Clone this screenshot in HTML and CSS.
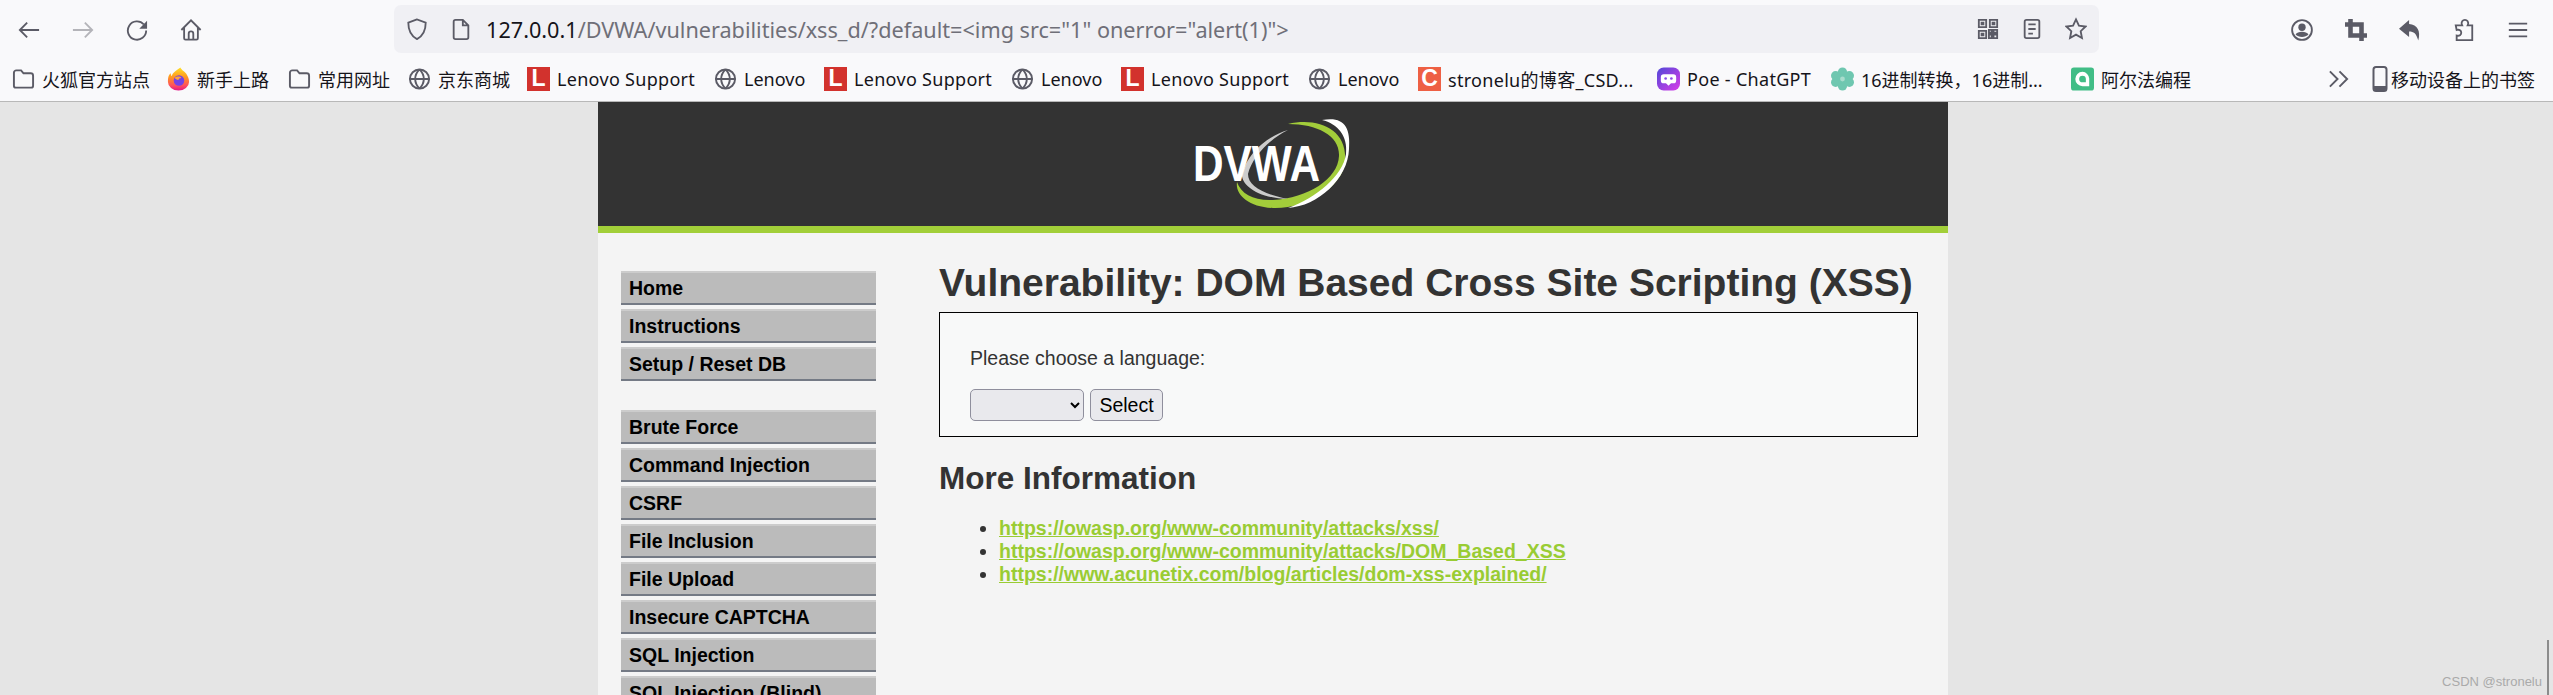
FILE: index.html
```html
<!DOCTYPE html>
<html lang="en">
<head>
  <meta charset="UTF-8">
  <title>Vulnerability: DOM Based Cross Site Scripting (XSS)</title>
  <link rel="stylesheet" href="styles.css">
</head>
<body>
  <!-- Browser toolbar -->
  <div class="toolbar">
    <div class="nav-icons">
      <svg class="icon" viewBox="0 0 24 24"><path d="M23 12H2M10 4l-8 8 8 8"/></svg>
      <svg class="icon icon-off" viewBox="0 0 24 24"><path d="M1 12h21M14 4l8 8-8 8"/></svg>
      <svg class="icon" viewBox="0 0 24 24"><path d="M19.500 6A10 10 0 1 0 22 12.500"/><path class="solid" d="M23 2v8.500h-8.500z"/></svg>
      <svg class="icon" viewBox="0 0 24 24"><path d="M1.500 12 12 1.500 22.500 12M4.500 9.500V21a1.500 1.500 0 0 0 1.500 1.500h12a1.500 1.500 0 0 0 1.500-1.500V9.500M9.500 22.500V16a2.500 2.500 0 0 1 5 0v6.500"/></svg>
    </div>
    <div class="urlbar">
      <svg class="icon" viewBox="0 0 24 24"><path d="M12 1.500 2.500 5c0 9 2.500 14.500 9.500 18 7-3.500 9.500-9 9.500-18z"/></svg>
      <svg class="icon icon-doc" viewBox="0 0 24 24"><path d="M4 4a2 2 0 0 1 2-2h8l6 6v13a2 2 0 0 1-2 2H6a2 2 0 0 1-2-2zM14 2v6h6"/></svg>
      <div class="url"><span class="url-host">127.0.0.1</span>/DVWA/vulnerabilities/xss_d/?default=&lt;img src="1" onerror="alert(1)"&gt;</div>
      <div class="url-actions">
        <svg class="icon" viewBox="0 0 24 24"><path d="M2 2h8v8H2zM14 2h8v8h-8zM2 14h8v8H2zM5 5h2v2H5zM17 5h2v2h-2zM5 17h2v2H5zM13 13h3v3h-3zM18 13h4v3h-4zM13 18h3v4h-3zM18 18h4v4h-4z"/></svg>
        <svg class="icon" viewBox="0 0 24 24"><path d="M4 4a2 2 0 0 1 2-2h12a2 2 0 0 1 2 2v16a2 2 0 0 1-2 2H6a2 2 0 0 1-2-2zM8 7h8M8 12h8M8 17h5"/></svg>
        <svg class="icon" viewBox="0 0 24 24"><path d="m12 1.500 3.200 6.900 7.300.9-5.400 5.100 1.400 7.400-6.500-3.700-6.500 3.700 1.400-7.400L1.500 9.300l7.300-.9z"/></svg>
      </div>
    </div>
    <div class="tool-icons">
      <svg class="icon" viewBox="0 0 24 24"><circle cx="12" cy="12" r="10.800"/><circle class="solid" cx="12" cy="9" r="4"/><path class="solid" d="M5 17c3 3.500 11 3.500 14 0-1-2-4-3-7-3s-6 1-7 3z"/></svg>
      <svg class="icon icon-crop" viewBox="0 0 24 24"><path d="M6 0v18h18M0 6h18v18"/></svg>
      <svg class="icon" viewBox="0 0 24 24"><path class="solid" d="M11 1 0 10.500l11 9v-6c5 0 8 2 10 10 3-10-1-17.500-10-18z"/></svg>
      <svg class="icon" viewBox="0 0 24 24"><path d="M3 7h7c-2-4 1-6 3-6s5 2 3 6h5v16H4v-5c3 1 5-1 5-3s-2-4-5-3z"/></svg>
      <svg class="icon" viewBox="0 0 24 24"><path d="M2 5h20M2 12h20M2 19h20"/></svg>
    </div>
  </div>

  <!-- Bookmarks -->
  <div class="bookmarks">
    <div class="bookmark">
      <svg class="bm-icon" viewBox="0 0 24 24"><path class="bm-line" d="M2 5.500A2.500 2.500 0 0 1 4.500 3h5l2.500 3h7.500A2.500 2.500 0 0 1 22 8.500V19a2 2 0 0 1-2 2H4a2 2 0 0 1-2-2z"/></svg>
      火狐官方站点
    </div>
    <div class="bookmark">
      <svg class="bm-icon" viewBox="0 0 24 24"><defs><linearGradient id="fx" x1="0" y1="0" x2="0" y2="1"><stop offset="0" stop-color="#ffe226"/><stop offset=".4" stop-color="#ff9a1f"/><stop offset=".78" stop-color="#ff4f5e"/><stop offset="1" stop-color="#e31587"/></linearGradient></defs><path d="M14 0c1 3 5 4 7 8 2 3 2 6 2 7a11 9 0 0 1-22 0c0-3 0-7 3-9 0 1 0 2 1 3 1-4 5-6 9-9z" fill="url(#fx)"/><circle cx="12.500" cy="13.500" r="5.500" fill="#7542e5"/><path d="M8 11c2-2 6-2 7 0-2 0-3 1-3 2-2 0-3-1-4-2z" fill="#ffa436"/></svg>
      新手上路
    </div>
    <div class="bookmark">
      <svg class="bm-icon" viewBox="0 0 24 24"><path class="bm-line" d="M2 5.500A2.500 2.500 0 0 1 4.500 3h5l2.500 3h7.500A2.500 2.500 0 0 1 22 8.500V19a2 2 0 0 1-2 2H4a2 2 0 0 1-2-2z"/></svg>
      常用网址
    </div>
    <div class="bookmark">
      <svg class="bm-icon" viewBox="0 0 24 24"><circle class="bm-line" cx="12" cy="12" r="10"/><path class="bm-line" d="M2 12h20M12 2c-6 6-6 14 0 20M12 2c6 6 6 14 0 20"/></svg>
      京东商城
    </div>
    <div class="bookmark latin"><span class="favicon favicon-lenovo">L</span>Lenovo Support</div>
    <div class="bookmark">
      <svg class="bm-icon" viewBox="0 0 24 24"><circle class="bm-line" cx="12" cy="12" r="10"/><path class="bm-line" d="M2 12h20M12 2c-6 6-6 14 0 20M12 2c6 6 6 14 0 20"/></svg>
      Lenovo
    </div>
    <div class="bookmark latin"><span class="favicon favicon-lenovo">L</span>Lenovo Support</div>
    <div class="bookmark">
      <svg class="bm-icon" viewBox="0 0 24 24"><circle class="bm-line" cx="12" cy="12" r="10"/><path class="bm-line" d="M2 12h20M12 2c-6 6-6 14 0 20M12 2c6 6 6 14 0 20"/></svg>
      Lenovo
    </div>
    <div class="bookmark latin"><span class="favicon favicon-lenovo">L</span>Lenovo Support</div>
    <div class="bookmark">
      <svg class="bm-icon" viewBox="0 0 24 24"><circle class="bm-line" cx="12" cy="12" r="10"/><path class="bm-line" d="M2 12h20M12 2c-6 6-6 14 0 20M12 2c6 6 6 14 0 20"/></svg>
      Lenovo
    </div>
    <div class="bookmark latin"><span class="favicon favicon-csdn">C</span>stronelu的博客_CSD...</div>
    <div class="bookmark latin">
      <svg class="bm-icon" viewBox="0 0 24 24"><defs><linearGradient id="poe" x1="0" y1="0" x2="1" y2="1"><stop offset="0" stop-color="#5148d8"/><stop offset="1" stop-color="#d93ce8"/></linearGradient></defs><rect y="0" width="24" height="24" rx="7" fill="url(#poe)"/><rect x="4" y="7" width="16" height="9.500" rx="3" fill="#fff"/><path d="M9 16h6l-3 3z" fill="#fff"/><circle cx="9" cy="11.500" r="1.400" fill="#8a4be8"/><circle cx="15" cy="11.500" r="1.400" fill="#8a4be8"/></svg>
      Poe - ChatGPT
    </div>
    <div class="bookmark">
      <svg class="bm-icon" viewBox="0 0 24 24"><circle cx="12" cy="4.800" r="4.800" fill="#6fc7b0"/><circle cx="12" cy="19.200" r="4.800" fill="#6fc7b0"/><circle cx="4.800" cy="8.500" r="4.800" fill="#6fc7b0"/><circle cx="19.200" cy="8.500" r="4.800" fill="#6fc7b0"/><circle cx="4.800" cy="15.500" r="4.800" fill="#6fc7b0"/><circle cx="19.200" cy="15.500" r="4.800" fill="#6fc7b0"/><circle cx="12" cy="12" r="5" fill="#6fc7b0"/><circle cx="12" cy="12" r="2.500" fill="#a9dccd"/></svg>
      16进制转换，16进制...
    </div>
    <div class="bookmark">
      <svg class="bm-icon" viewBox="0 0 24 24"><rect width="24" height="24" rx="3" fill="#41bd86"/><path d="M12 4.500a7.500 7.500 0 1 0 0 15h7v-8A7.500 7.500 0 0 0 12 4.500zm0 4a3.500 3.500 0 0 1 3.500 3.500v3.500H12a3.500 3.500 0 0 1 0-7z" fill="#fff"/></svg>
      阿尔法编程
    </div>
    <div class="bookmarks-end">
      <svg class="bm-icon" viewBox="0 0 24 24"><path class="bm-line" d="m3 4 8 8-8 8M13 4l8 8-8 8"/></svg>
      <div class="bookmark mobile">
        <svg class="bm-phone" viewBox="0 0 16 26"><rect class="bm-line" x="1.500" y="1" width="13" height="24" rx="2.500"/><path d="M2 20h12v3a1.500 1.500 0 0 1-1.500 1.500h-9A1.500 1.500 0 0 1 2 23z" fill="#5b5b66"/></svg>
        移动设备上的书签
      </div>
    </div>
  </div>

  <!-- Page -->
  <div class="page">
    <div class="container">
      <div class="header">
        <svg class="logo" viewBox="0 0 165 100">
          <path d="M100 10C130 3 160 15 157 48 155 72 120 95 85 94 60 93 47 80 49 68 53 80 66 87 85 86 120 84 150 65 151 42 152 22 130 10 100 10Z" fill="#a2cd3a"/>
          <path d="M134 6C155 2 163 12 161 35 160 65 130 92 100 94 128 84 155 62 158 40 160 22 150 10 134 6Z" fill="#fff"/>
          <path d="M100 16C80 22 60 38 54 60 53 70 68 84 100 85 75 80 60 72 60 60 64 44 80 26 100 16Z" fill="#ccc"/>
          <text class="logo-text" x="5" y="67" textLength="127" lengthAdjust="spacingAndGlyphs">DVWA</text>
        </svg>
      </div>
      <div class="content">
        <div class="sidebar">
          <ul class="menu">
            <li>Home</li>
            <li>Instructions</li>
            <li>Setup / Reset DB</li>
          </ul>
          <ul class="menu">
            <li>Brute Force</li>
            <li>Command Injection</li>
            <li>CSRF</li>
            <li>File Inclusion</li>
            <li>File Upload</li>
            <li>Insecure CAPTCHA</li>
            <li>SQL Injection</li>
            <li>SQL Injection (Blind)</li>
          </ul>
        </div>
        <div class="main">
          <h1>Vulnerability: DOM Based Cross Site Scripting (XSS)</h1>
          <div class="vulnerable-code">
            <p>Please choose a language:</p>
            <form class="lang-form">
              <select class="lang-select"><option></option></select>
              <button type="button" class="select-btn">Select</button>
            </form>
          </div>
          <h2>More Information</h2>
          <ul class="links">
            <li><a href="#">https://owasp.org/www-community/attacks/xss/</a></li>
            <li><a href="#">https://owasp.org/www-community/attacks/DOM_Based_XSS</a></li>
            <li><a href="#">https://www.acunetix.com/blog/articles/dom-xss-explained/</a></li>
          </ul>
        </div>
      </div>
    </div>
    <div class="scroll-thumb"></div>
    <div class="watermark">CSDN @stronelu</div>
  </div>
</body>
</html>
```

FILE: styles.css
```css
html, body {
  height: 100%;
}

body {
  margin: 0;
  display: flex;
  flex-direction: column;
  overflow: hidden;
  font-family: "Liberation Sans", Arial, sans-serif;
  background-color: #e5e5e5;
}

/* Browser toolbar */
.toolbar {
  display: flex;
  align-items: center;
  height: 58px;
  background-color: #f9f9fb;
  padding-top: 2px;
  box-sizing: border-box;
  flex: none;
}

.icon {
  width: 22px;
  height: 24px;
  fill: none;
  stroke: #5b5b66;
  stroke-width: 2;
  flex: none;
}

.icon .solid {
  fill: #5b5b66;
  stroke: none;
}

.icon-off {
  stroke: #b4b4b9;
}

.icon-crop {
  stroke-width: 5;
}

.nav-icons {
  display: flex;
  gap: 32px;
  margin-left: 18px;
  width: 376px;
}

.urlbar {
  display: flex;
  align-items: center;
  width: 1705px;
  height: 48px;
  margin-top: -2px;
  padding: 0 12px;
  box-sizing: border-box;
  background-color: #f0f0f4;
  border-radius: 7px;
}

.icon-doc {
  margin-left: 22px;
}

.url {
  margin-left: 14px;
  flex: 1;
  font-family: "Noto Sans", "Liberation Sans", sans-serif;
  font-size: 21.650px;
  color: #6f6f78;
  white-space: nowrap;
}

.url-host {
  color: #15141a;
}

.url-actions {
  display: flex;
  gap: 22px;
}

.tool-icons {
  display: flex;
  gap: 32px;
  margin-left: 192px;
}

/* Bookmarks */
.bookmarks {
  display: grid;
  grid-template-columns: 155px 121px 120px 119px 187px 110px 187px 110px 187px 110px 239px 174px 240px 240px 1fr;
  align-items: center;
  height: 44px;
  padding-left: 12px;
  padding-bottom: 2px;
  box-sizing: border-box;
  background-color: #f9f9fb;
  border-bottom: 1px solid #b8b8b8;
  font-family: "Noto Sans", "Noto Sans CJK SC", sans-serif;
  font-size: 18px;
  color: #15141a;
  white-space: nowrap;
  flex: none;
}

.bookmark {
  display: flex;
  align-items: center;
  gap: 7px;
}

.latin {
  letter-spacing: 0.3px;
}

.bm-icon {
  width: 23px;
  height: 24px;
  flex: none;
}

.bm-line {
  fill: none;
  stroke: #5b5b66;
  stroke-width: 2;
}

.bm-phone {
  width: 16px;
  height: 26px;
}

.favicon {
  width: 23px;
  height: 24px;
  display: flex;
  align-items: center;
  justify-content: center;
  color: #fff;
  font-family: "Liberation Sans", sans-serif;
  font-weight: bold;
  font-size: 23px;
  letter-spacing: 0;
}

.favicon-lenovo {
  background-color: #d2322d;
}

.favicon-csdn {
  background-color: #ee6044;
}

.bookmarks-end {
  display: flex;
  align-items: center;
  gap: 22px;
  justify-self: end;
  padding-right: 18px;
}

.mobile {
  gap: 3px;
}

/* Page */
.page {
  flex: 1;
  min-height: 0;
  position: relative;
  overflow: hidden;
  padding-right: 7px;
}

.container {
  width: 1350px;
  margin: 0 auto;
  background-color: #f4f4f4;
  height: 100%;
}

.header {
  height: 124px;
  background-color: #333;
  border-bottom: 7px solid #a2cf39;
  display: flex;
  justify-content: center;
  align-items: center;
}

.logo {
  width: 165px;
  height: 100px;
  margin-right: 6px;
}

.logo-text {
  font-family: "Liberation Sans", sans-serif;
  font-weight: bold;
  font-size: 50px;
  fill: #fff;
}

.content {
  display: flex;
}

.sidebar {
  width: 255px;
  margin-left: 23px;
  padding-top: 38px;
  flex: none;
}

.menu {
  list-style: none;
  margin: 0 0 29px;
  padding: 0;
}

.menu li {
  height: 34px;
  margin-bottom: 4px;
  padding-left: 8px;
  box-sizing: border-box;
  background-color: #bbb;
  border-top: 2px solid #ccc;
  border-bottom: 2px solid #747a85;
  font-size: 19.500px;
  font-weight: bold;
  line-height: 30px;
  color: #000;
}

.main {
  margin-left: 63px;
  width: 979px;
  flex: none;
}

h1 {
  margin: 20px 0 0;
  font-size: 39px;
  line-height: 59px;
  color: #333;
  white-space: nowrap;
}

.vulnerable-code {
  height: 125px;
  box-sizing: border-box;
  padding: 34px 30px 0;
  background-color: #f8f9f9;
  border: 1px solid #000;
}

.vulnerable-code p {
  margin: 0 0 19px;
  font-size: 19.500px;
  line-height: 23px;
  color: #333;
}

.lang-form {
  display: flex;
  gap: 6px;
}

.lang-select {
  width: 114px;
  height: 32px;
  border: 1px solid #8f8f9d;
  border-radius: 5px;
  background-color: #e9e9ed;
}

.select-btn {
  width: 73px;
  height: 32px;
  padding: 0;
  border: 1px solid #8f8f9d;
  border-radius: 5px;
  background-color: #e9e9ed;
  font-family: "Liberation Sans", sans-serif;
  font-size: 19.500px;
  color: #000;
}

h2 {
  margin: 23px 0 0;
  font-size: 31.500px;
  line-height: 36px;
  color: #333;
}

.links {
  margin: 21px 0 0;
  padding-left: 60px;
  font-size: 19.500px;
  line-height: 23px;
  color: #333;
}

.links a {
  color: #9c3;
  font-weight: bold;
}

.scroll-thumb {
  position: absolute;
  right: 4px;
  bottom: 0;
  width: 2px;
  height: 55px;
  background-color: #8c8c8c;
}

.watermark {
  position: absolute;
  right: 11px;
  bottom: 6px;
  font-size: 13px;
  color: #aaa;
}
```
